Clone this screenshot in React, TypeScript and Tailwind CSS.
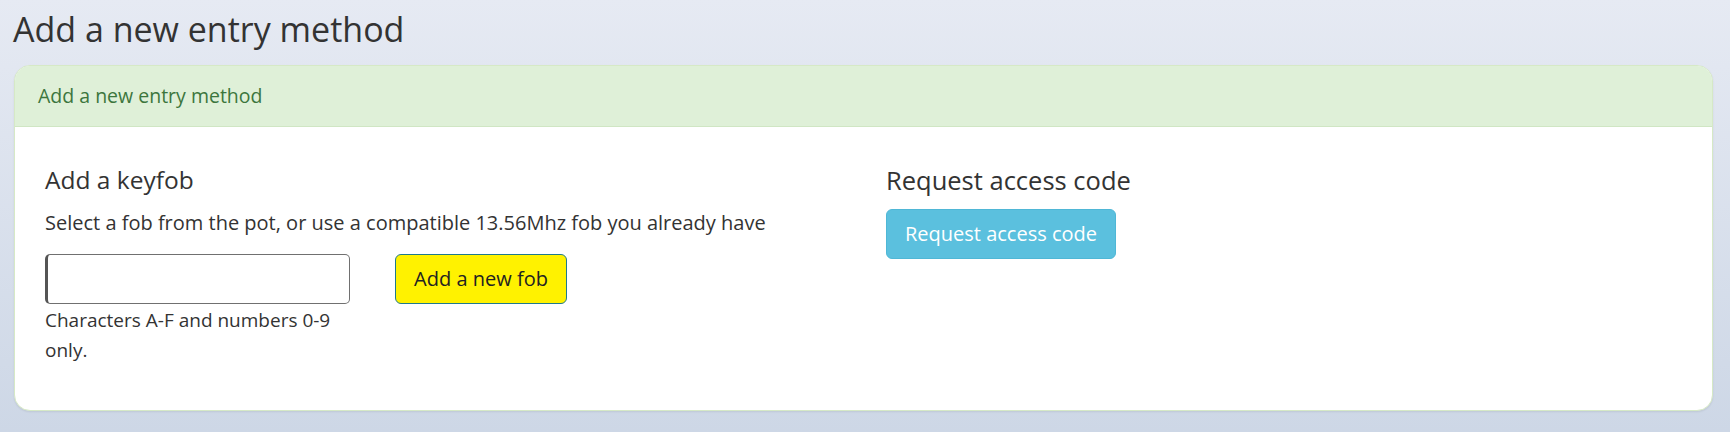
export default function App() {
  const font = { fontFamily: '"Open Sans", "Noto Sans", sans-serif' };
  return (
    <div
      className="min-h-[432px] w-full bg-gradient-to-b from-[#e6eaf3] to-[#cdd7e6] pt-[4px] pb-[21px] text-[#333]"
      style={font}
    >
      <h1 className="ml-[13px] text-[34px] leading-[50px] font-normal">Add a new entry method</h1>

      <div className="mt-[11px] ml-[14px] mr-[17px] rounded-[16px] border border-[#d6e9c6] bg-white overflow-hidden shadow-[0_1px_2px_rgba(0,0,0,0.08)]">
        <div className="h-[61px] flex items-center px-[23px] bg-[#dff0d8] border-b border-[#d0e6c4] text-[#3c763d] text-[19.5px]">
          Add a new entry method
        </div>

        <div className="flex px-[30px] pt-[38px] pb-[45px]">
          <div className="w-[841px] shrink-0">
            <h3 className="text-[24.5px] leading-[30px]">Add a keyfob</h3>
            <p className="mt-[13px] text-[20px] leading-[30px]">
              Select a fob from the pot, or use a compatible 13.56Mhz fob you already have
            </p>
            <div className="mt-[16px] flex items-start gap-[45px]">
              <div className="w-[305px]">
                <input
                  type="text"
                  className="block w-full h-[50px] rounded-[5px] border border-[#707070] border-l-[3px] border-l-[#555] bg-white px-3 outline-none"
                />
                <p className="mt-[1px] text-[19px] leading-[30px]">Characters A-F and numbers 0-9 only.</p>
              </div>
              <button className="h-[50px] w-[172px] rounded-[6px] border border-[#1f7a8c] bg-[#fff200] text-[20px] text-[#222]">
                Add a new fob
              </button>
            </div>
          </div>

          <div>
            <h3 className="text-[25.5px] leading-[30px]">Request access code</h3>
            <button className="mt-[14px] h-[50px] w-[230px] rounded-[6px] border border-[#4fb7d6] bg-[#5bc0de] text-[20px] text-white">
              Request access code
            </button>
          </div>
        </div>
      </div>
    </div>
  );
}
